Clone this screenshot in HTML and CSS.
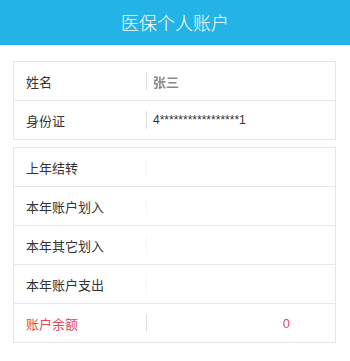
FILE: index.html
```html
<!DOCTYPE html>
<html>
<head>
<meta charset="utf-8">
<link rel="stylesheet" href="styles.css">
</head>
<body>
<header class="bar">医保个人账户</header>
<main class="content">
  <section class="card">
    <div class="row"><span class="label">姓名</span><span class="sep"></span><span class="value name">张三</span></div>
    <div class="row"><span class="label">身份证</span><span class="sep"></span><span class="value">4*****************1</span></div>
  </section>
  <section class="card second">
    <div class="row"><span class="label">上年结转</span><span class="sep faint"></span><span class="value"></span></div>
    <div class="row"><span class="label">本年账户划入</span><span class="sep faint"></span><span class="value"></span></div>
    <div class="row"><span class="label">本年其它划入</span><span class="sep faint"></span><span class="value"></span></div>
    <div class="row"><span class="label">本年账户支出</span><span class="sep faint"></span><span class="value"></span></div>
    <div class="row red"><span class="label">账户余额</span><span class="sep"></span><span class="value amount">0</span></div>
  </section>
</main>
</body>
</html>
```
FILE: styles.css
```css
* { box-sizing: border-box; }
html, body { margin: 0; padding: 0; background: #fff; }
body {
  font-family: "Noto Sans CJK SC", "Noto Sans", "Liberation Sans", sans-serif;
  color: #333;
  width: 350px;
}
.bar {
  height: 45px;
  background: #24b3e6;
  color: #fff;
  font-size: 18px;
  font-weight: 300;
  line-height: 45px;
  text-align: center;
}
.content {
  padding: 16px 14px 0 13px;
  display: flex;
  flex-direction: column;
  gap: 7px;
}
.card {
  border: 1px solid #e6e6e6;
}
.row {
  height: 39px;
  display: flex;
  align-items: center;
  font-size: 13px;
  border-top: 1px solid #e8e8e8;
}
.row:first-child { border-top: none; height: 38px; }
.label {
  width: 132px;
  padding-left: 12px;
  flex: none;
}
.sep {
  width: 1px;
  height: 18px;
  background: #e0e0e0;
  flex: none;
}
.sep.faint { background: #f6f6f6; }
.value {
  flex: 1;
  padding-left: 6px;
  font-family: "Liberation Sans", "Noto Sans CJK SC", sans-serif;
  font-size: 12px;
}
.name {
  color: #888;
  font-weight: bold;
  filter: blur(0.7px);
  font-family: "Noto Sans CJK SC", sans-serif;
  font-size: 13px;
}
.red { color: #e5474f; }
.amount {
  text-align: right;
  padding-right: 45px;
  font-size: 13px;
}
```
